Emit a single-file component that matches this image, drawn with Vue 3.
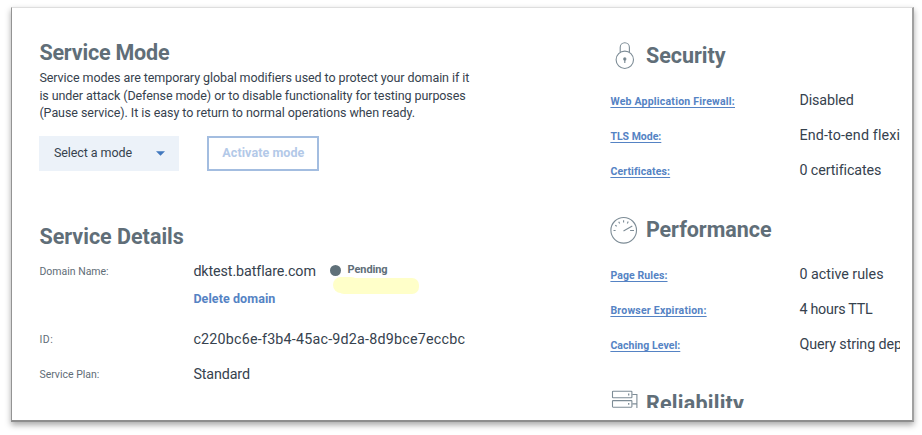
<script setup>
const security = [
  { label: 'Web Application Firewall:', value: 'Disabled', key: 'waf' },
  { label: 'TLS Mode:', value: 'End-to-end flexible', key: 'tls' },
  { label: 'Certificates:', value: '0 certificates', key: 'certs' },
]
const performance = [
  { label: 'Page Rules:', value: '0 active rules', key: 'rules' },
  { label: 'Browser Expiration:', value: '4 hours TTL', key: 'ttl' },
  { label: 'Caching Level:', value: 'Query string dependent', key: 'cache' },
]
</script>

<template>
  <div class="frame">
    <div class="viewport">
      <main class="service">
        <h2 class="mode-title">Service Mode</h2>
        <p class="intro">
          <span class="l1">Service modes are temporary global modifiers used to protect your domain if it</span>
          <span class="l2">is under attack (Defense mode) or to disable functionality for testing purposes</span>
          <span class="l3">(Pause service). It is easy to return to normal operations when ready.</span>
        </p>
        <div class="actions">
          <button class="select">
            <span>Select a mode</span>
            <svg width="9" height="5" viewBox="0 0 9 5"><path d="M0 .2h9L4.5 4.8z" fill="#4178be" /></svg>
          </button>
          <button class="activate">Activate mode</button>
        </div>

        <h2 class="details-title">Service Details</h2>
        <dl class="details">
          <dt>Domain Name:</dt>
          <dd>
            <div class="domain">
              <span class="domain-name">dktest.batflare.com</span>
              <i class="dot"></i>
              <span class="pending">Pending<i class="marker"></i></span>
            </div>
            <a class="delete">Delete domain</a>
          </dd>
          <dt class="id-label">ID:</dt>
          <dd class="id">c220bc6e-f3b4-45ac-9d2a-8d9bce7eccbc</dd>
          <dt>Service Plan:</dt>
          <dd class="plan">Standard</dd>
        </dl>
      </main>

      <aside class="summary">
        <section>
          <h2>
            <svg class="icon" width="28" height="28" viewBox="0 0 28 28" fill="none" stroke="#7d8c96" stroke-width="1.1">
              <circle cx="14.8" cy="17.8" r="8.7" />
              <path d="M10.2 10.3V5.4a4.6 4.6 0 0 1 9.2 0v4.9" />
              <path d="M14.8 17.5v3.4" stroke-width="1.2" />
              <circle cx="14.8" cy="17" r="1.1" fill="#53646f" />
            </svg>
            <span>Security</span>
          </h2>
          <div v-for="row in security" :key="row.key" class="row">
            <a :class="row.key">{{ row.label }}</a>
            <span :class="row.key + '-value'">{{ row.value }}</span>
          </div>
        </section>
        <section>
          <h2>
            <svg class="icon" width="28" height="28" viewBox="0 0 28 28" fill="none" stroke="#7d8c96" stroke-width="1.1">
              <circle cx="13.7" cy="14.3" r="12.8" />
              <path d="M13.5 14.9L22.3 10M3.5 14.5h2.1M20.1 14.5H24M5.2 9.2l1.6 1M8.7 5.7l1 1.9M13.6 4.2v2.4M18.2 5.5l-.9 1.9" />
            </svg>
            <span class="performance-title">Performance</span>
          </h2>
          <div v-for="row in performance" :key="row.key" class="row">
            <a :class="row.key">{{ row.label }}</a>
            <span :class="row.key + '-value'">{{ row.value }}</span>
          </div>
        </section>
        <section>
          <h2>
            <svg class="icon" width="28" height="28" viewBox="0 0 28 28" fill="none" stroke="#7d8c96" stroke-width="1.1">
              <rect x="2.5" y="1.2" width="19.4" height="6.6" rx=".6" />
              <rect x="2.5" y="10.6" width="19.4" height="6.6" rx=".6" />
              <rect x="2.5" y="20" width="19.4" height="6.6" rx=".6" />
              <path d="M22.3 4.5h4.6v18.8M22.3 13.9h4.6" />
              <path d="M18.7 3.6v1.8M18.7 13v1.8" stroke-width="1.3" />
            </svg>
            <span class="reliability-title">Reliability</span>
          </h2>
        </section>
      </aside>
    </div>
  </div>
</template>

<style>
body {
  background: #fff;
}
#app {
  box-sizing: border-box;
  height: 435px;
  padding-top: 7px;
  overflow: hidden;
}
</style>

<style scoped>
.frame {
  box-sizing: border-box;
  width: 903px;
  height: 415px;
  margin-left: 11px;
  border: 1px solid #dedede;
  border-left-color: #939393;
  border-right: 2px solid #a0a0a0;
  border-bottom: 2px solid #8e8e8e;
  background: #fff;
  box-shadow: 0 3px 6px rgba(0, 0, 0, 0.34);
  font-family: Roboto, 'Liberation Sans', sans-serif;
  color: #36424e;
}
.viewport {
  display: grid;
  grid-template-columns: 571px 1fr;
  width: 861px;
  height: 400px;
  margin-left: 27.4px;
  overflow: hidden;
}
h2 {
  margin: 0;
  font-size: 21.5px;
  line-height: 28px;
  font-weight: 700;
  color: #606e78;
  white-space: nowrap;
}
.service {
  padding-top: 31px;
}
.mode-title {
  letter-spacing: -0.2px;
}
.intro {
  margin: 2px 0 0;
  font-size: 12.5px;
  line-height: 17.5px;
  white-space: nowrap;
}
.intro span {
  display: block;
}
.l1 { letter-spacing: -0.075px; }
.l2 { letter-spacing: -0.085px; }
.l3 { letter-spacing: -0.055px; }
.actions {
  display: flex;
  gap: 28.5px;
  margin-top: 14px;
}
button {
  box-sizing: border-box;
  height: 35px;
  border: 0;
  padding: 0;
  font: 400 12.5px/16px Roboto, sans-serif;
}
.select {
  display: flex;
  align-items: center;
  justify-content: space-between;
  width: 139.5px;
  padding: 0 14px 0 14.5px;
  background: #ecf2f9;
  color: #36424e;
  letter-spacing: -0.08px;
}
.activate {
  width: 112px;
  border: 2px solid #a3bde0;
  background: #fff;
  color: #b3c9e8;
  font-weight: 700;
  letter-spacing: 0.07px;
}
.details-title {
  margin-top: 52px;
}
.details {
  display: grid;
  grid-template-columns: 154px 1fr;
  grid-template-rows: 68px 35px 35px;
  margin: 6px 0 0;
  line-height: 28px;
}
dt {
  padding-top: 1px;
  font-size: 10.5px;
  color: #5f6d77;
}
.id-label {
  letter-spacing: 0.5px;
}
dd {
  margin: 0;
  font-size: 14.3px;
}
.domain {
  display: flex;
  align-items: center;
  height: 28px;
}
.domain-name {
  width: 136.4px;
  letter-spacing: -0.1px;
}
.dot {
  width: 11px;
  height: 11px;
  border-radius: 50%;
  margin: -1px 6.8px 0 0;
  background: #5f7079;
}
.pending {
  position: relative;
  font-size: 11px;
  font-weight: 700;
  letter-spacing: -0.1px;
  color: #606e78;
  margin-top: -1px;
}
.marker,
.marker::before {
  position: absolute;
  background: #ffffc9;
}
.marker {
  left: -11px;
  top: 21.5px;
  width: 82px;
  height: 16px;
  border-radius: 7px;
}
.marker::before {
  content: '';
  left: -3.5px;
  top: -1px;
  width: 26px;
  height: 16px;
  border-radius: 8px;
}
.delete {
  display: block;
  font-size: 12.5px;
  font-weight: 700;
  letter-spacing: 0.08px;
  color: #5583c4;
}
.id { letter-spacing: 0.21px; }
.plan { letter-spacing: -0.12px; }

.summary section {
  height: 174px;
}
.summary {
  padding-top: 33px;
}
.summary h2 {
  display: flex;
  align-items: center;
  gap: 7.5px;
  height: 30px;
  margin-bottom: 12px;
}
.icon {
  flex: none;
}
.performance-title { letter-spacing: -0.05px; }
.reliability-title { letter-spacing: 0.25px; }
.row {
  display: grid;
  grid-template-columns: 189px 1fr;
  height: 35px;
  line-height: 34px;
  font-size: 14.3px;
  white-space: nowrap;
}
.row a {
  padding-top: 2px;
  font-size: 10.5px;
  line-height: 34px;
  font-weight: 700;
  color: #5583c4;
  text-decoration: underline;
  text-underline-offset: 2px;
  text-decoration-thickness: 1px;
  text-decoration-skip-ink: none;
}
.waf { letter-spacing: 0.22px; }
.certs { letter-spacing: 0.12px; }
.rules { letter-spacing: 0.1px; }
.ttl { letter-spacing: 0.23px; }
.cache { letter-spacing: 0.06px; }
.waf-value,
.certs-value { letter-spacing: -0.1px; }
.tls-value { letter-spacing: 0.15px; }
.ttl-value { letter-spacing: -0.25px; }
.cache-value { letter-spacing: -0.1px; }
</style>
